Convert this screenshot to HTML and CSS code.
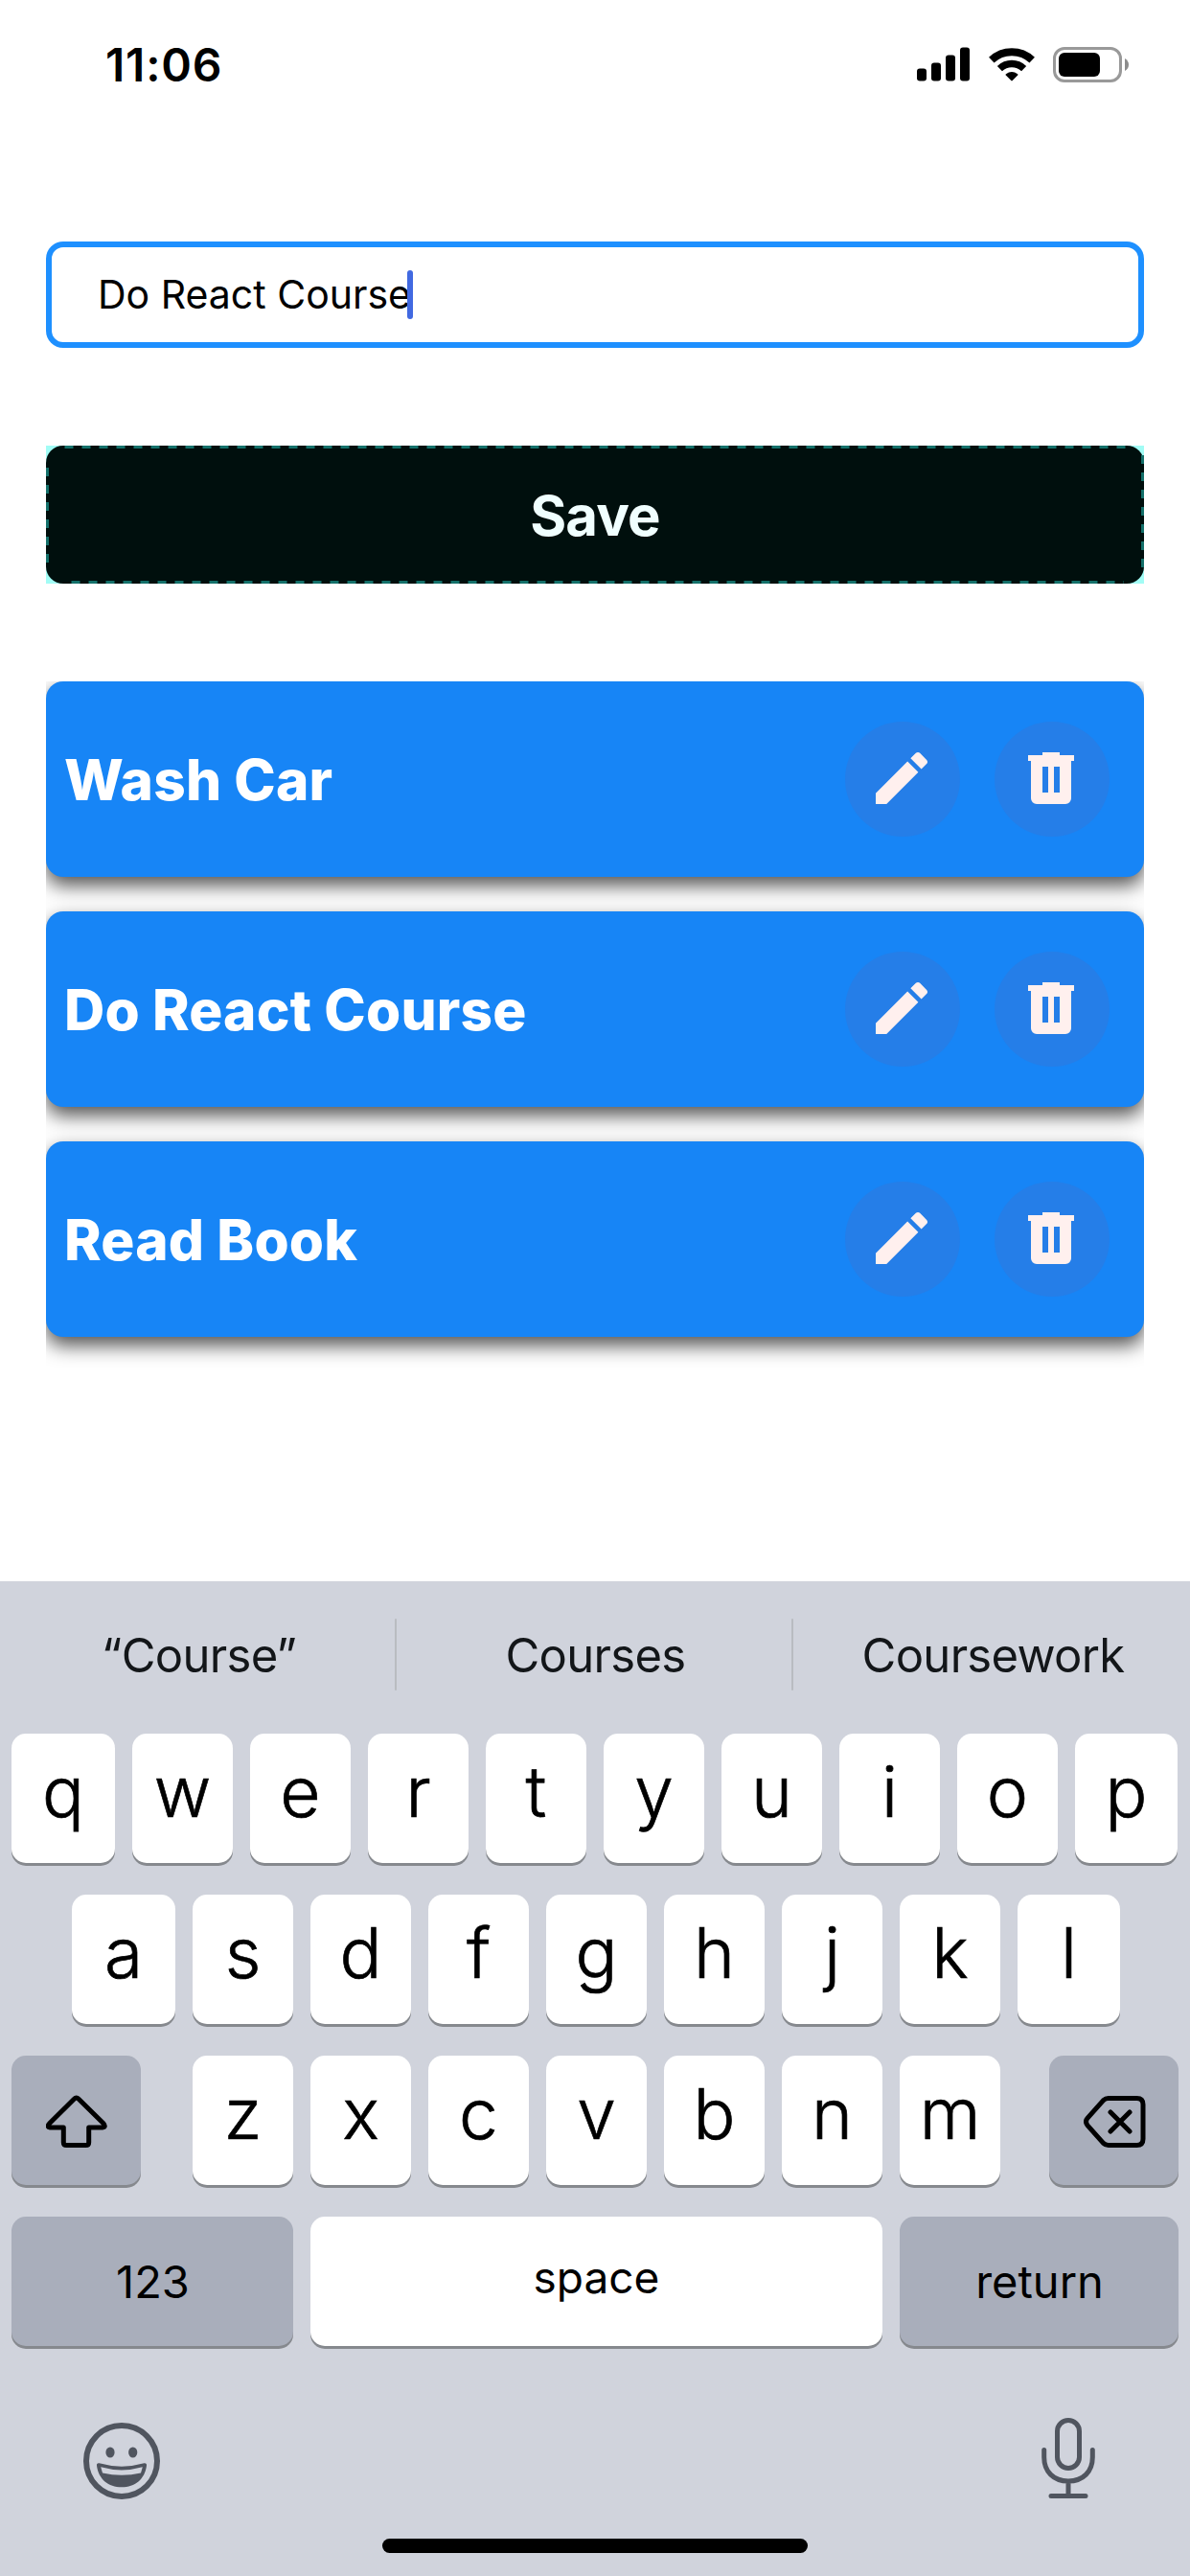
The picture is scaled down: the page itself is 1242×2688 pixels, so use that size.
FILE: index.html
```html
<!DOCTYPE html>
<html lang="en">
<head>
<meta charset="utf-8">
<title>Todo list</title>
<link rel="stylesheet" href="styles.css">
</head>
<body>
<svg width="0" height="0" class="sprite" aria-hidden="true">
  <symbol id="pencil" viewBox="0 0 24 24"><path d="M20.71,7.04C21.1,6.65 21.1,6 20.71,5.63L18.37,3.29C18,2.9 17.35,2.9 16.96,3.29L15.12,5.12L18.87,8.87M3,17.25V21H6.75L17.81,9.93L14.06,6.18L3,17.25Z"/></symbol>
  <symbol id="trash" viewBox="0 0 24 24"><path d="M9,3V4H4V6H5V19A2,2 0 0,0 7,21H17A2,2 0 0,0 19,19V6H20V4H15V3H9M9,8H11V17H9V8M13,8H15V17H13V8Z"/></symbol>
</svg>

<header class="status">
  <span class="time">11:06</span>
  <div class="indicators">
    <svg class="signal" width="55" height="36" viewBox="0 0 55 36">
      <rect x="0" y="22.5" width="10" height="13" rx="3"/>
      <rect x="15" y="16.5" width="10" height="19" rx="3"/>
      <rect x="30" y="8.5" width="10" height="27" rx="3"/>
      <rect x="45" y="0.5" width="10" height="35" rx="3"/>
    </svg>
    <svg class="wifi" width="48" height="37" viewBox="0 0 48 37">
      <path class="arc" stroke-width="8" d="M2.8 13.6A31 31 0 0 1 45.2 13.6"/>
      <path class="arc" stroke-width="7.4" d="M11.4 22.6A18.3 18.3 0 0 1 36.6 22.6"/>
      <path d="M17.8 29.6Q17 28.8 17.9 28.2A10.5 10.5 0 0 1 30.1 28.2Q31 28.8 30.2 29.6L24.7 35.1Q24 35.8 23.3 35.1Z"/>
    </svg>
    <svg class="battery" width="80" height="38" viewBox="0 0 80 38">
      <rect x="1.5" y="1.5" width="69" height="34" rx="10.5" fill="none" stroke="#999" stroke-width="3"/>
      <rect x="6" y="6" width="43" height="25" rx="6"/>
      <path d="M75 12Q79 14.5 79 18.5Q79 22.5 75 25Z" fill="#8c8c8c"/>
    </svg>
  </div>
</header>

<main class="app">
  <div class="field"><span>Do React Course</span><i class="caret"></i></div>

  <div class="save">
    <div class="save-face">Save</div>
    <svg class="dashes" width="1146" height="144" viewBox="0 0 1146 144"><path d="M19.5 1.5H1130M1144.5 10V128M26.5 142.5H1125M1.5 23V122"/></svg>
  </div>

  <div class="list">
    <div class="card"><span class="title">Wash Car</span><span class="round"><svg><use href="#pencil"/></svg></span><span class="round"><svg><use href="#trash"/></svg></span></div>
    <div class="card"><span class="title">Do React Course</span><span class="round"><svg><use href="#pencil"/></svg></span><span class="round"><svg><use href="#trash"/></svg></span></div>
    <div class="card"><span class="title">Read Book</span><span class="round"><svg><use href="#pencil"/></svg></span><span class="round"><svg><use href="#trash"/></svg></span></div>
  </div>
</main>

<section class="keyboard">
  <div class="suggestions">
    <span>“Course”</span><i></i><span>Courses</span><i></i><span>Coursework</span>
  </div>
  <div class="row row-top">
    <b class="key">q</b><b class="key">w</b><b class="key">e</b><b class="key">r</b><b class="key">t</b><b class="key">y</b><b class="key">u</b><b class="key">i</b><b class="key">o</b><b class="key">p</b>
  </div>
  <div class="row row-home">
    <b class="key">a</b><b class="key">s</b><b class="key">d</b><b class="key">f</b><b class="key">g</b><b class="key">h</b><b class="key">j</b><b class="key">k</b><b class="key">l</b>
  </div>
  <div class="row row-low">
    <b class="key dark shift">
      <svg width="64" height="56" viewBox="0 0 64 56"><path d="M29.6 4Q31.7 1.8 33.8 4L60 29.8Q63 33.6 59 34H44.7V49.5Q44.7 52.6 41.6 52.6H21.4Q18.3 52.6 18.3 49.5V34H4.2Q.4 33.6 3.6 29.8Z"/></svg>
    </b>
    <b class="key">z</b><b class="key">x</b><b class="key">c</b><b class="key">v</b><b class="key">b</b><b class="key">n</b><b class="key">m</b>
    <b class="key dark erase">
      <svg width="65" height="56" viewBox="0 0 65 56"><path d="M25.8 3.5H55.5Q62 3.5 62 10V46Q62 52.5 55.5 52.5H25.8Q22.8 52.5 20.6 50.4L4.1 31.8Q.9 28 4.1 24.2L20.6 5.6Q22.8 3.5 25.8 3.5ZM28 18L48 38M48 18L28 38"/></svg>
    </b>
  </div>
  <div class="row row-bottom">
    <b class="key dark word">123</b><b class="key word space">space</b><b class="key dark word">return</b>
  </div>
  <div class="tools">
    <svg width="80" height="80" viewBox="0 0 80 80">
      <circle cx="40" cy="40" r="37" fill="none" stroke="#50555f" stroke-width="6"/>
      <ellipse cx="28" cy="31" rx="4.6" ry="5.6" fill="#50555f"/>
      <ellipse cx="51.7" cy="31" rx="4.6" ry="5.6" fill="#50555f"/>
      <path d="M16.5 42.3Q40 49 63.5 42.3Q66.4 42 66 45C64 59 54 67.3 40 67.3S16 59 14 45Q13.6 42 16.5 42.3Z" fill="#50555f"/>
      <path d="M18.2 46.3Q40 52.5 61.8 46.3L60 52.5Q40 57 20 52.5Z" fill="#d0d3dc"/>
    </svg>
    <svg width="56" height="84" viewBox="0 0 56 84"><path d="M28 2.5A11.5 11.5 0 0 1 39.5 14V41A11.5 11.5 0 0 1 16.5 41V14A11.5 11.5 0 0 1 28 2.5ZM2.7 33.5V41C2.7 56 12.5 66 28 66S53.3 56 53.3 41V33.5M28 66V81.5M10 81.5H46"/></svg>
  </div>
  <div class="home"></div>
</section>
</body>
</html>
```
FILE: styles.css
```css
* { box-sizing: border-box; }

body {
  margin: 0;
  width: 1242px;
  height: 2688px;
  display: flex;
  flex-direction: column;
  background: #fff;
  color: #000;
  font-family: Inter, "Liberation Sans", sans-serif;
  overflow: hidden;
}

svg { display: block; flex: none; }
.sprite { position: absolute; }

/* Status bar */
.status {
  height: 135px;
  padding: 0 63px 0 110px;
  display: flex;
  justify-content: space-between;
  align-items: center;
}
.time { font-size: 48px; font-weight: 600; letter-spacing: 0.8px; }
.indicators { display: flex; align-items: flex-start; }
.wifi { margin-left: 19.5px; }
.battery { margin-left: 19.5px; }
.arc { fill: none; stroke: #000; }

/* App content */
.app {
  height: 1515px;
  padding: 117px 48px 0;
}
.field {
  height: 111px;
  padding: 0 0 1px 48px;
  display: flex;
  align-items: center;
  border: 6px solid #1e90ff;
  border-radius: 18px;
  font-size: 41px;
}
.caret {
  width: 6px;
  height: 51px;
  margin-left: -4px;
  border-radius: 3px;
  background: #4169e1;
}

.save {
  position: relative;
  height: 144px;
  margin-top: 102px;
  background: #a2fcf5;
}
.save-face {
  height: 144px;
  padding-top: 2px;
  display: flex;
  align-items: center;
  justify-content: center;
  border-radius: 18px;
  background: #000f0d;
  color: #f0ffff;
  font-size: 58px;
  font-weight: 700;
  letter-spacing: -0.8px;
}
.dashes {
  position: absolute;
  inset: 0;
  fill: none;
  stroke: #14706a;
  stroke-width: 3;
  stroke-dasharray: 9 9;
}

.list {
  margin-top: 102px;
  padding-bottom: 60px;
  display: flex;
  flex-direction: column;
  gap: 36px;
  overflow: hidden;
}
.card {
  height: 204px;
  padding: 0 36px 0 19px;
  display: flex;
  align-items: center;
  gap: 36px;
  border-radius: 18px;
  background: #1785f6;
  box-shadow: 0 9px 20px rgba(0, 0, 0, 0.68);
}
.title {
  flex: 1;
  color: #fff;
  font-size: 58.5px;
  font-weight: 800;
  letter-spacing: 0.2px;
}
.round {
  width: 120px;
  height: 120px;
  padding: 23px 0 0 23px;
  border-radius: 50%;
  background: #257ee8;
}
.round svg { width: 72px; height: 72px; fill: #fff0ee; }

/* Keyboard */
.keyboard {
  height: 1038px;
  background: #d0d3dc;
}
.suggestions {
  height: 153px;
  display: grid;
  grid-template-columns: 412px 2px 412px 2px 414px;
  align-items: center;
  text-align: center;
  font-size: 49px;
  letter-spacing: -0.7px;
  color: #131619;
}
.suggestions span { padding: 2px 0 0 3px; }
.suggestions i { height: 75px; background: #b9bcc1; border-radius: 1px; }

.row {
  height: 135px;
  display: grid;
  column-gap: 18px;
}
.row + .row { margin-top: 33px; }
.suggestions + .row { margin-top: 6px; }
.row-top {
  padding-left: 12px;
  grid-template-columns: 108px repeat(8, 105px) 107px;
}
.row-home {
  padding-left: 75px;
  grid-template-columns: 108px repeat(7, 105px) 107px;
}
.row-low {
  padding-left: 12px;
  grid-template-columns: 171px repeat(7, 105px) 168px;
}
.row-bottom {
  padding-left: 12px;
  grid-template-columns: 294px 597px 291px;
}

.key {
  padding-bottom: 14px;
  display: flex;
  align-items: center;
  justify-content: center;
  border-radius: 15px;
  background: #fff;
  box-shadow: 0 3px 0 #86898e;
  font-size: 73px;
  font-weight: 300;
  -webkit-text-stroke: 0.7px #000;
}
.dark { background: #a9aebb; padding: 2px 0 0 1px; }
.dark svg { fill: none; stroke: #000; stroke-width: 5; stroke-linecap: round; stroke-linejoin: round; }
.shift { width: 135px; }
.erase { margin-left: 33px; }
.word { font-size: 47px; font-weight: 400; -webkit-text-stroke: 0; padding-top: 0; }
.space { padding-bottom: 9px; font-size: 46px; }

.tools {
  height: 198px;
  padding: 75px 99px 0 87px;
  display: flex;
  justify-content: space-between;
}
.tools svg:first-child { margin-top: 5px; }
.tools svg:last-child { fill: none; stroke: #50555f; stroke-width: 5; stroke-linecap: round; }

.home {
  width: 444px;
  height: 15px;
  margin: 3px auto 0;
  border-radius: 8px;
  background: #000;
}
```
